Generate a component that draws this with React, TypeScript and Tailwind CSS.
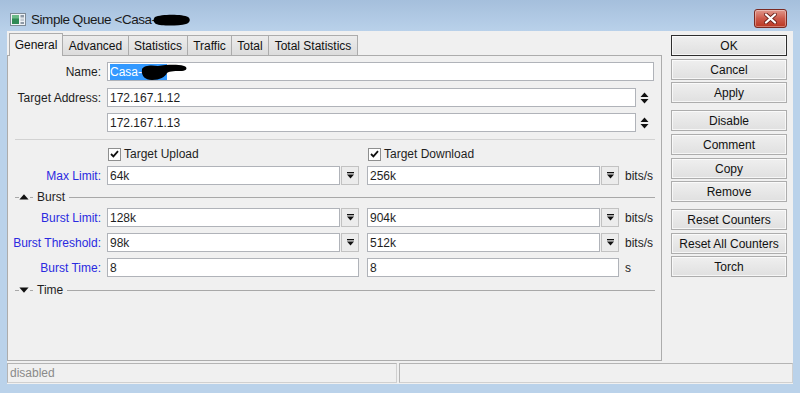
import React from "react";

function TitleIcon() {
  return (
    <svg width="16" height="13" viewBox="0 0 16 13">
      <rect x="0.5" y="0.5" width="15" height="12" fill="#eef2f6" stroke="#7d8a96" />
      <rect x="2" y="2" width="7" height="9" fill="#2f8a55" />
      <rect x="2" y="2" width="7" height="3.5" fill="#6cba88" />
      <rect x="10.5" y="2" width="3.5" height="2.5" fill="#8d99a6" />
      <rect x="10.5" y="5.5" width="3.5" height="2.5" fill="#c4ccd4" />
      <rect x="10.5" y="9" width="3.5" height="2" fill="#8d99a6" />
    </svg>
  );
}

function CloseButton() {
  return (
    <div className="mt-[1px] w-[33px] h-[19px] rounded-[3px] border border-[#7b2a22] bg-linear-to-b from-[#e0978c] via-[#cc5a4b] to-[#b9351f] flex items-center justify-center shadow-[inset_0_0_0_1px_rgba(255,255,255,0.35)]">
      <svg width="13" height="11" viewBox="0 0 13 11">
        <path d="M2 1.5 L11 9.5 M11 1.5 L2 9.5" stroke="#6a1f18" strokeWidth="3.8" strokeLinecap="round" />
        <path d="M2 1.5 L11 9.5 M11 1.5 L2 9.5" stroke="#ffffff" strokeWidth="2.3" strokeLinecap="round" />
      </svg>
    </div>
  );
}

function Spin() {
  return (
    <div className="w-[17px] h-[19px] flex items-center justify-center">
      <svg width="9" height="12" viewBox="0 0 9 12">
        <path d="M4.5 0.5 L8.5 5 H0.5 Z M0.5 7 H8.5 L4.5 11.5 Z" fill="#111" />
      </svg>
    </div>
  );
}

function DropBtn() {
  return (
    <div className="ml-[1px] w-[18px] h-[19px] border border-[#c2c2c2] bg-[#ececec] flex items-center justify-center">
      <svg width="7" height="7" viewBox="0 0 7 7">
        <rect x="0" y="0" width="7" height="1.3" fill="#111" />
        <path d="M0 2.6 H7 L3.5 6.6 Z" fill="#111" />
      </svg>
    </div>
  );
}

function Check() {
  return (
    <div className="w-[13px] h-[13px] border border-[#8e8f8f] bg-white flex items-center justify-center">
      <svg width="9" height="8" viewBox="0 0 9 8">
        <path d="M1 4 L3.4 6.4 L8 1.2" stroke="#111" strokeWidth="1.8" fill="none" />
      </svg>
    </div>
  );
}

function Input({ className, value }: { className: string; value?: string }) {
  return (
    <div className={"h-[19px] border border-[#b0b3b9] bg-white pl-[2px] flex items-center text-[#1e1e1e] leading-none " + className}>
      {value}
    </div>
  );
}

function Label({ text, blue }: { text: string; blue?: boolean }) {
  return (
    <div className={"w-[93px] text-right leading-none " + (blue ? "text-[#2a2ae0]" : "text-[#1e1e1e]")}>{text}</div>
  );
}

function GroupHeader({ label, up, className }: { label: string; up?: boolean; className: string }) {
  return (
    <div className={"h-[14px] flex items-center ml-[7px] mr-[6px] " + className}>
      <div className="w-[4px] h-px bg-[#a8a8a8]" />
      <svg width="10" height="6" viewBox="0 0 10 6">
        {up ? <path d="M5 0.3 L9.6 5.6 H0.4 Z" fill="#111" /> : <path d="M0.4 0.4 H9.6 L5 5.7 Z" fill="#111" />}
      </svg>
      <div className="w-[3px] h-px bg-[#a8a8a8] ml-[1px]" />
      <span className="ml-[4px] leading-none text-[#1e1e1e]">{label}</span>
      <div className="flex-1 h-px bg-[#a8a8a8] ml-[4px]" />
    </div>
  );
}

function LimitRow({ label, a, b, className }: { label: string; a: string; b: string; className: string }) {
  return (
    <div className={"flex items-center h-[19px] " + className}>
      <Label text={label} blue />
      <Input className="ml-[6px] w-[233px]" value={a} />
      <DropBtn />
      <Input className="ml-[8px] w-[233px]" value={b} />
      <DropBtn />
      <span className="ml-[6px] leading-none text-[#1e1e1e]">bits/s</span>
    </div>
  );
}

function Btn({ text, className, focus }: { text: string; className: string; focus?: boolean }) {
  return (
    <div
      className={
        "w-[116px] h-[21px] flex items-center justify-center leading-none text-[#111] bg-linear-to-b from-[#efefef] to-[#e0e0e0] shadow-[inset_0_0_0_1px_rgba(255,255,255,0.7)] border " +
        (focus ? "border-[#2e2e2e] " : "border-[#adadad] ") +
        className
      }
    >
      {text}
    </div>
  );
}

export default function App() {
  const tabs = [
    { t: "Advanced", w: "w-[67px]" },
    { t: "Statistics", w: "w-[60px]" },
    { t: "Traffic", w: "w-[45px]" },
    { t: "Total", w: "w-[38px]" },
    { t: "Total Statistics", w: "w-[90px]" },
  ];
  return (
    <div className="w-[800px] h-[393px] bg-[#bad2ea] flex flex-col overflow-hidden font-['Liberation_Sans',Arial,sans-serif] text-[12px] text-black">
      {/* Title bar */}
      <div className="h-[31px] shrink-0 flex items-center pt-[8px] pl-[10px] pr-[13px] bg-linear-to-b from-[#a5bfdc] to-[#b9d1ea]">
        <TitleIcon />
        <span className="ml-[5px] text-[13.5px] tracking-[-0.45px] text-[#1a1a1a] leading-none">Simple Queue &lt;Casa-</span>
        <svg width="38" height="12" viewBox="0 0 38 12" className="-ml-[3px]">
          <path d="M2 3 C8 0, 30 0, 35 3 C38 5, 37 9, 33 10 C25 12, 8 12, 3 10 C0 8, 0 5, 2 3 Z" fill="#000" />
        </svg>
        <div className="flex-1" />
        <div className="self-start">
          <CloseButton />
        </div>
      </div>

      {/* Client */}
      <div className="flex-1 mx-[7px] mb-[9px] bg-[#f0f0f0] flex flex-col">
        <div className="h-[330px] flex">
          {/* Left: tabs + panel */}
          <div className="w-[655px] flex flex-col">
            <div className="h-[24px] pt-[2px] pl-[2px] flex items-end shrink-0">
              <div className="relative z-10 w-[54px] h-[23px] -mb-px border border-b-0 border-[#acacac] bg-[#f0f0f0] flex items-center justify-center leading-none text-[#111]">
                General
              </div>
              {tabs.map((tb) => (
                <div
                  key={tb.t}
                  className={"-ml-px h-[20px] border border-b-0 border-[#acacac] bg-linear-to-b from-[#ececec] to-[#dcdcdc] flex items-center justify-center leading-none text-[#111] " + tb.w}
                >
                  {tb.t}
                </div>
              ))}
            </div>
            <div className="flex-1 border border-[#acacac] bg-[#f0f0f0] flex flex-col">
              {/* Name */}
              <div className="mt-[6px] flex items-center h-[19px]">
                <Label text="Name:" />
                <div className="relative ml-[6px] w-[547px] h-[19px] border border-[#b0b3b9] bg-white pl-[2px] flex items-center">
                  <span className="h-[16px] bg-[#3399ff] text-white leading-[16px] pr-[25px]">Casa-</span>
                  <svg width="48" height="18" viewBox="0 0 48 18" className="absolute left-[32px] top-0">
                    <path
                      d="M2 6 C4 2, 12 2, 18 3 C26 2, 36 1, 44 3 C48 4, 47 8, 42 8 C36 8, 30 8, 27 10 C25 14, 20 17, 12 17 C5 17, 1 13, 2 6 Z"
                      fill="#000"
                    />
                  </svg>
                </div>
              </div>
              {/* Target address */}
              <div className="mt-[7px] flex items-center h-[19px]">
                <Label text="Target Address:" />
                <Input className="ml-[6px] w-[529px]" value="172.167.1.12" />
                <Spin />
              </div>
              <div className="mt-[6px] flex items-center h-[19px]">
                <Label text="" />
                <Input className="ml-[6px] w-[529px]" value="172.167.1.13" />
                <Spin />
              </div>
              <div className="mt-[7px] h-px bg-[#d2d2d2] ml-[7px] mr-[6px]" />
              {/* Checkboxes */}
              <div className="mt-[7px] h-[14px] flex items-center">
                <div className="w-[100px]" />
                <div className="w-[260px] flex items-center">
                  <Check />
                  <span className="ml-[3px] leading-none text-[#1e1e1e]">Target Upload</span>
                </div>
                <div className="flex items-center">
                  <Check />
                  <span className="ml-[3px] leading-none text-[#1e1e1e]">Target Download</span>
                </div>
              </div>
              <LimitRow className="mt-[5px]" label="Max Limit:" a="64k" b="256k" />
              <GroupHeader className="mt-[5px]" label="Burst" up />
              <LimitRow className="mt-[4px]" label="Burst Limit:" a="128k" b="904k" />
              <LimitRow className="mt-[6px]" label="Burst Threshold:" a="98k" b="512k" />
              <div className="mt-[6px] flex items-center h-[19px]">
                <Label text="Burst Time:" blue />
                <Input className="ml-[6px] w-[252px]" value="8" />
                <Input className="ml-[8px] w-[252px]" value="8" />
                <span className="ml-[6px] leading-none text-[#1e1e1e]">s</span>
              </div>
              <GroupHeader className="mt-[6px]" label="Time" />
            </div>
          </div>

          {/* Right: buttons */}
          <div className="pl-[9px] pt-[4px] flex flex-col">
            <Btn text="OK" className="" focus />
            <Btn text="Cancel" className="mt-[3px]" />
            <Btn text="Apply" className="mt-[2px]" />
            <Btn text="Disable" className="mt-[7px]" />
            <Btn text="Comment" className="mt-[3px]" />
            <Btn text="Copy" className="mt-[3px]" />
            <Btn text="Remove" className="mt-[2px]" />
            <Btn text="Reset Counters" className="mt-[7px]" />
            <Btn text="Reset All Counters" className="mt-[3px]" />
            <Btn text="Torch" className="mt-[2px]" />
          </div>
        </div>

        {/* Status bar */}
        <div className="mt-[2px] h-[20px] flex gap-[2px]">
          <div className="w-[390px] border border-[#d0d0d0] border-t-[#b4b4b4] border-l-[#b4b4b4] flex items-center pl-[2px] text-[#8a8a8a] leading-none">
            disabled
          </div>
          <div className="flex-1 border border-[#d0d0d0] border-t-[#b4b4b4] border-l-[#b4b4b4]" />
        </div>
      </div>
    </div>
  );
}
